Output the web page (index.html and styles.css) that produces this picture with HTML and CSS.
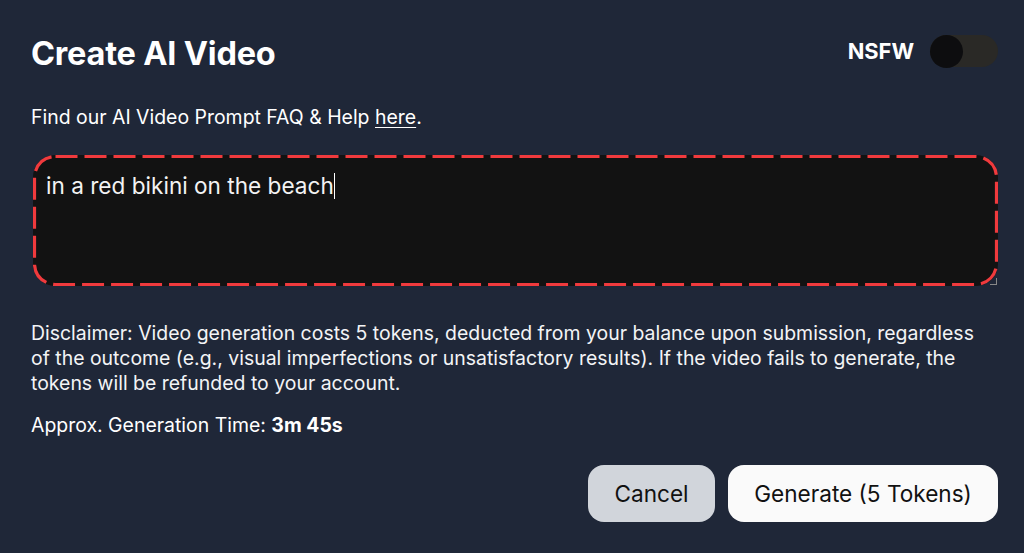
FILE: index.html
```html
<!DOCTYPE html>
<html lang="en">
<head>
<meta charset="utf-8">
<link rel="stylesheet" href="styles.css">
</head>
<body>
<div class="dialog">
  <div class="header">
    <h1 class="title">Create AI Video</h1>
    <div class="nsfw">
      <span class="nsfw-label">NSFW</span>
      <span class="toggle"><span class="knob"></span></span>
    </div>
  </div>
  <p class="help">Find our AI Video Prompt FAQ &amp; Help <a href="#" class="link">here</a>.</p>
  <div class="prompt">
    <svg class="prompt-border" width="100%" height="100%" preserveAspectRatio="none">
      <rect x="1.5" y="1.5" width="calc(100% - 3px)" height="calc(100% - 3px)" rx="21" ry="21" fill="none" stroke="#f03a3d" stroke-width="3.2" stroke-dasharray="22 7"></rect>
    </svg>
    <span class="prompt-text">in a red bikini on the beach</span><span class="caret"></span><span class="grip"></span>
  </div>
  <p class="disclaimer">Disclaimer: Video generation costs 5 tokens, deducted from your balance upon submission, regardless of the outcome (e.g., visual imperfections or unsatisfactory results). If the video fails to generate, the tokens will be refunded to your account.</p>
  <p class="time">Approx. Generation Time: <b>3m 45s</b></p>
  <div class="actions">
    <button class="btn btn-cancel">Cancel</button>
    <button class="btn btn-generate">Generate (5 Tokens)</button>
  </div>
</div>
</body>
</html>
```
FILE: styles.css
```css
html, body {
  margin: 0;
  height: 100%;
}
body {
  background: #1f2738;
  font-family: Inter, "Noto Sans", sans-serif;
  color: #ffffff;
}
.dialog {
  padding: 34px 26px 0 31px;
  display: flex;
  flex-direction: column;
}
.header {
  display: flex;
  justify-content: space-between;
  align-items: center;
  height: 40px;
}
.title {
  margin: 0;
  font-size: 32.5px;
  font-weight: 700;
  letter-spacing: -0.2px;
  line-height: 40px;
}
.nsfw {
  display: flex;
  align-items: center;
  gap: 16px;
  margin-top: -6px;
}
.nsfw-label {
  font-size: 21.8px;
  font-weight: 700;
}
.toggle {
  position: relative;
  width: 68px;
  height: 32px;
  border-radius: 16px;
  background: #2a2926;
  display: flex;
  align-items: center;
}
.knob {
  width: 33px;
  height: 33px;
  border-radius: 50%;
  background: #0d0d0f;
}
.help {
  margin: 30px 0 0;
  font-size: 19.45px;
  line-height: 26px;
}
.link {
  color: #ffffff;
  text-decoration: underline;
  text-underline-offset: 3px;
}
.prompt {
  position: relative;
  box-sizing: border-box;
  margin: 25px 0 0 2px;
  height: 131px;
  border-radius: 22px;
  background: #121212;
  padding: 17px 13px;
  font-size: 22.6px;
  line-height: 28px;
  color: #f3f3f3;
  display: flex;
  align-items: flex-start;
}
.prompt-border {
  position: absolute;
  left: 0;
  top: 0;
  pointer-events: none;
}
.caret {
  width: 1px;
  height: 26px;
  background: #ffffff;
  margin-top: 1px;
}
.grip {
  position: absolute;
  right: 1px;
  bottom: 1px;
  width: 6px;
  height: 6px;
  border-right: 1px solid #888;
  border-bottom: 1px solid #888;
}
.disclaimer {
  margin: 35px 0 0;
  font-size: 19.45px;
  line-height: 25px;
  color: #f3f4f6;
}
.time {
  margin: 17px 0 0;
  font-size: 19.45px;
  line-height: 25px;
}
.actions {
  display: flex;
  justify-content: flex-end;
  gap: 13px;
  margin-top: 27px;
}
.btn {
  font-family: Inter, "Noto Sans", sans-serif;
  font-size: 22.6px;
  height: 57px;
  border: none;
  border-radius: 16px;
  color: #111111;
  padding: 0;
}
.btn-cancel {
  background: #d1d5db;
  width: 127px;
}
.btn-generate {
  background: #fafafa;
  width: 270px;
}
```
